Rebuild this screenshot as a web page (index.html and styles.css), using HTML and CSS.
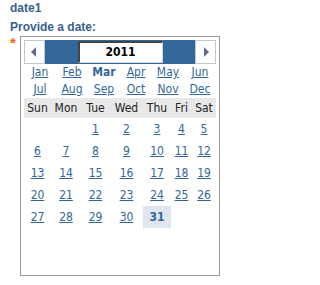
FILE: index.html
```html
<!DOCTYPE html>
<html>
<head>
<meta charset="utf-8">
<link rel="stylesheet" href="styles.css">
</head>
<body>
<div class="title">date1</div>
<div class="label">Provide a date:</div>
<div class="field">
  <span class="req">*</span>
  <div class="cal">
    <div class="nav">
      <span class="btn"><svg width="19" height="22" viewBox="0 0 19 22"><path d="M6 11 L11 6 L11 16 Z" fill="#6a6a9a"/></svg></span>
      <div class="mid"><span class="year">2011</span></div>
      <span class="btn"><svg width="19" height="22" viewBox="0 0 19 22"><path d="M13 11 L8 6 L8 16 Z" fill="#6a6a9a"/></svg></span>
    </div>
    <table class="months">
      <tr><td><a href="#">Jan</a></td><td><a href="#">Feb</a></td><td><b class="cur">Mar</b></td><td><a href="#">Apr</a></td><td><a href="#">May</a></td><td><a href="#">Jun</a></td></tr>
      <tr><td><a href="#">Jul</a></td><td><a href="#">Aug</a></td><td><a href="#">Sep</a></td><td><a href="#">Oct</a></td><td><a href="#">Nov</a></td><td><a href="#">Dec</a></td></tr>
    </table>
    <table class="days">
      <colgroup><col class="c1"><col class="c2"><col class="c3"><col class="c4"><col class="c5"><col class="c6"><col class="c7"></colgroup>
      <tr class="head"><th>Sun</th><th>Mon</th><th>Tue</th><th>Wed</th><th>Thu</th><th>Fri</th><th>Sat</th></tr>
      <tr><td></td><td></td><td><a href="#">1</a></td><td><a href="#">2</a></td><td><a href="#">3</a></td><td><a href="#">4</a></td><td><a href="#">5</a></td></tr>
      <tr><td><a href="#">6</a></td><td><a href="#">7</a></td><td><a href="#">8</a></td><td><a href="#">9</a></td><td><a href="#">10</a></td><td><a href="#">11</a></td><td><a href="#">12</a></td></tr>
      <tr><td><a href="#">13</a></td><td><a href="#">14</a></td><td><a href="#">15</a></td><td><a href="#">16</a></td><td><a href="#">17</a></td><td><a href="#">18</a></td><td><a href="#">19</a></td></tr>
      <tr><td><a href="#">20</a></td><td><a href="#">21</a></td><td><a href="#">22</a></td><td><a href="#">23</a></td><td><a href="#">24</a></td><td><a href="#">25</a></td><td><a href="#">26</a></td></tr>
      <tr><td><a href="#">27</a></td><td><a href="#">28</a></td><td><a href="#">29</a></td><td><a href="#">30</a></td><td class="sel">31</td><td></td><td></td></tr>
    </table>
  </div>
</div>
</body>
</html>
```
FILE: styles.css
```css
html, body {
  margin: 0;
  padding: 0;
  background: #fff;
}
body {
  padding: 1px 0 0 10px;
  font-family: "Liberation Sans", Arial, sans-serif;
}
.title, .label {
  font-weight: bold;
  font-size: 12px;
  line-height: 14px;
  color: #3a5f8f;
}
.title {
  margin-bottom: 5px;
}
.label {
  margin-bottom: 2px;
}
.field {
  display: flex;
  align-items: flex-start;
}
.req {
  width: 10px;
  color: #ff6600;
  font-weight: bold;
  font-size: 15px;
  line-height: 15px;
  margin-top: -1px;
}
.cal {
  box-sizing: border-box;
  width: 200px;
  height: 240px;
  border: 1px solid #999;
  padding: 3px;
  font-family: "DejaVu Sans Condensed", "DejaVu Sans", sans-serif;
  font-size: 12px;
}
.nav {
  display: flex;
  height: 24px;
  background: #336699;
}
.btn {
  box-sizing: border-box;
  width: 21px;
  height: 24px;
  border: 1px solid #c8c8c8;
  background: #fff;
  display: flex;
}
.mid {
  flex: 1;
  display: flex;
  align-items: center;
  justify-content: center;
}
.year {
  box-sizing: border-box;
  width: 85px;
  height: 22px;
  background: #fff;
  border-style: solid;
  border-width: 2px 1px 1px 2px;
  border-color: #444 #d4d4d4 #d4d4d4 #444;
  font-weight: bold;
  font-size: 12px;
  line-height: 19px;
  text-align: center;
  color: #000;
}
table {
  border-collapse: collapse;
  border-spacing: 0;
  width: 100%;
}
td, th {
  padding: 0;
  text-align: center;
}
.months {
  table-layout: fixed;
}
.months td {
  height: 17px;
  line-height: 17px;
}
a {
  color: #336699;
  text-decoration: underline;
}
.cur {
  color: #336699;
}
.days {
  table-layout: fixed;
}
.c1 { width: 27px; }
.c2 { width: 30px; }
.c3 { width: 29px; }
.c4 { width: 33px; }
.c5 { width: 28px; }
.c6 { width: 21px; }
.c7 { width: 24px; }
.head th {
  background: #e8e8e8;
  font-weight: normal;
  color: #222;
  height: 20px;
  line-height: 20px;
}
.days td {
  height: 22px;
  line-height: 22px;
}
.days td.sel {
  background: #dfe6f0;
  font-weight: bold;
  color: #336699;
}
```
